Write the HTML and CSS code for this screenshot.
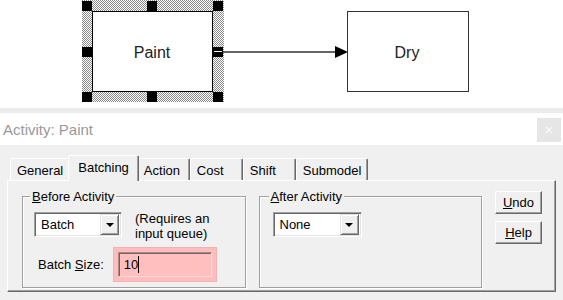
FILE: index.html
```html
<!DOCTYPE html>
<html lang="en">
<head>
    <meta charset="UTF-8">
    <meta name="viewport" content="width=device-width, initial-scale=1.0">
    <title>Activity: Paint</title>
    <link rel="stylesheet" href="styles.css">
</head>
<body>
    <div class="canvas">
        <svg width="563" height="108" viewBox="0 0 563 108">
            <defs>
                <pattern id="dither" width="2" height="2" patternUnits="userSpaceOnUse">
                    <rect width="2" height="2" fill="#fff"/>
                    <rect width="1" height="1" fill="#8a8a8a"/>
                    <rect x="1" y="1" width="1" height="1" fill="#8a8a8a"/>
                </pattern>
            </defs>
            <!-- selection frame round Paint -->
            <rect x="82" y="0" width="142" height="102" fill="url(#dither)"/>
            <rect x="92.5" y="11.5" width="120" height="80" fill="#fff" stroke="#000"/>
            <rect x="82" y="1" width="10" height="10" fill="#000"/>
            <rect x="147" y="1" width="10" height="10" fill="#000"/>
            <rect x="213" y="1" width="10" height="10" fill="#000"/>
            <rect x="82" y="47" width="10" height="10" fill="#000"/>
            <rect x="213" y="47" width="10" height="10" fill="#000"/>
            <rect x="82" y="92" width="10" height="10" fill="#000"/>
            <rect x="147" y="92" width="10" height="10" fill="#000"/>
            <rect x="213" y="92" width="10" height="10" fill="#000"/>
            <line x1="214" y1="51.5" x2="222" y2="51.5" stroke="#fff"/>
            <text x="152" y="57.5" class="node-label" text-anchor="middle">Paint</text>

            <!-- connector -->
            <line x1="223" y1="52" x2="337" y2="52" stroke="#333" stroke-width="1.5"/>
            <polygon points="335,46 348,52 335,58" fill="#000"/>

            <rect x="347.5" y="11.5" width="121" height="80" fill="#fff" stroke="#333"/>
            <text x="407" y="57.5" class="node-label" text-anchor="middle">Dry</text>
        </svg>
    </div>
    <div class="shade"></div>

    <div class="dialog">
        <div class="titlebar">
            <span class="title">Activity: Paint</span>
            <span class="close">&times;</span>
        </div>
        <div class="dialog-body">
            <div class="tabs">
                <div class="tab">General</div>
                <div class="tab active">Batching</div>
                <div class="tab">Action</div>
                <div class="tab">Cost</div>
                <div class="tab">Shift</div>
                <div class="tab">Submodel</div>
            </div>
            <div class="panel">
                <div class="group">
                    <span class="group-title"><u>B</u>efore Activity</span>
                    <div class="row">
                        <div class="combo">
                            <span class="combo-value">Batch</span>
                            <span class="combo-button"><i class="arrow"></i></span>
                        </div>
                        <div class="note">(Requires an<br>input queue)</div>
                    </div>
                    <div class="row size-row">
                        <label class="field-label" for="batchSize">Batch <u>S</u>ize:</label>
                        <div class="highlight">
                            <div class="field" id="batchSize">10<span class="caret"></span></div>
                        </div>
                    </div>
                </div>
                <div class="group group-after">
                    <span class="group-title"><u>A</u>fter Activity</span>
                    <div class="row">
                        <div class="combo combo-wide">
                            <span class="combo-value">None</span>
                            <span class="combo-button"><i class="arrow"></i></span>
                        </div>
                    </div>
                </div>
                <div class="buttons">
                    <button class="btn"><u>U</u>ndo</button>
                    <button class="btn"><u>H</u>elp</button>
                </div>
            </div>
        </div>
    </div>
</body>
</html>
```

FILE: styles.css
```css
body {
    margin: 0;
    width: 563px;
    height: 300px;
    overflow: hidden;
    font-family: "Liberation Sans", Arial, sans-serif;
    font-size: 13px;
    color: #000;
    background-color: #f0f0f0;
}
.canvas {
    height: 108px;
    background-color: #fff;
}
.canvas svg {
    display: block;
}
.node-label {
    font-family: "Liberation Sans", Arial, sans-serif;
    font-size: 16px;
    fill: #222;
}
.shade {
    height: 5px;
    background-color: #ebebeb;
}

/* title bar */
.titlebar {
    height: 32px;
    background-color: #fff;
    display: flex;
    align-items: center;
    justify-content: space-between;
    padding-left: 3px;
}
.title {
    font-size: 15px;
    color: #999;
}
.close {
    width: 24px;
    height: 24px;
    margin-right: 2px;
    margin-top: 2px;
    background-color: #e6e6e6;
    color: #fafafa;
    font-size: 15px;
    line-height: 24px;
    text-align: center;
}

/* tabs */
.dialog-body {
    height: 155px;
    box-sizing: border-box;
    padding: 10px 0 0 7px;
}
.tabs {
    display: flex;
    align-items: flex-end;
    height: 25px;
    padding-left: 3px;
}
.tab {
    box-sizing: border-box;
    height: 22px;
    min-width: 53px;
    padding: 2px 6px 0;
    line-height: 19px;
    border-top: 1px solid #fff;
    border-left: 1px solid #fff;
    border-right: 1px solid #696969;
    border-radius: 2px 2px 0 0;
    box-shadow: inset -1px 0 0 #a0a0a0;
    background-color: #f0f0f0;
}
.tab.active {
    position: relative;
    height: 26px;
    margin: 0 -2px -1px;
    padding: 2px 9px 0;
}
.panel {
    box-sizing: border-box;
    width: 549px;
    height: 112px;
    display: flex;
    align-items: flex-start;
    gap: 13px;
    padding: 15px 13px 0 14px;
    border-top: 1px solid #fff;
    border-left: 1px solid #fff;
    border-right: 1px solid #696969;
    border-bottom: 1px solid #696969;
    box-shadow: inset -1px -1px 0 #a0a0a0;
}

/* group boxes */
.group {
    box-sizing: border-box;
    width: 224px;
    height: 92px;
    padding: 0 11px;
    border: 1px solid #a0a0a0;
    box-shadow: inset 1px 1px 0 #fff, 1px 1px 0 #fff;
}
.group-after {
    padding-left: 13px;
}
.group-title {
    display: block;
    width: fit-content;
    margin: -8px 0 0 -4px;
    padding: 0 2px;
    line-height: 15px;
    background-color: #f0f0f0;
}
.row {
    display: flex;
    align-items: flex-start;
    gap: 13px;
    margin-top: 8px;
}
.size-row {
    align-items: center;
    gap: 9px;
    margin-top: 6px;
    padding-left: 4px;
}

/* combo box */
.combo {
    box-sizing: border-box;
    width: 88px;
    height: 25px;
    display: flex;
    align-items: center;
    justify-content: space-between;
    padding: 2px;
    background-color: #fff;
    border-top: 1px solid #a0a0a0;
    border-left: 1px solid #a0a0a0;
    border-right: 1px solid #fff;
    border-bottom: 1px solid #fff;
    box-shadow: inset 1px 1px 0 #696969, inset -1px -1px 0 #e3e3e3;
}
.combo-wide {
    width: 89px;
}
.combo-value {
    padding-left: 4px;
}
.combo-button {
    box-sizing: border-box;
    width: 19px;
    height: 21px;
    display: flex;
    align-items: center;
    justify-content: center;
    background-color: #f0f0f0;
    border-top: 1px solid #e3e3e3;
    border-left: 1px solid #e3e3e3;
    border-right: 1px solid #696969;
    border-bottom: 1px solid #696969;
    box-shadow: inset 1px 1px 0 #fff, inset -1px -1px 0 #a0a0a0;
}
.arrow {
    width: 0;
    height: 0;
    border-left: 4px solid transparent;
    border-right: 4px solid transparent;
    border-top: 4px solid #000;
}
.note {
    line-height: 15px;
    margin-top: -1px;
}

/* batch size field */
.highlight {
    padding: 4px;
    background-color: #ffbdbd;
    border: 1px solid #f5b0b0;
}
.field {
    box-sizing: border-box;
    width: 94px;
    height: 25px;
    display: flex;
    align-items: center;
    padding-left: 5px;
    background-color: #ffbfbf;
    border-top: 1px solid #a98989;
    border-left: 1px solid #a98989;
    border-right: 1px solid #ffd8d8;
    border-bottom: 1px solid #ffd8d8;
    box-shadow: inset 1px 1px 0 #7a6262;
}
.caret {
    width: 1px;
    height: 17px;
    background-color: #000;
}

/* buttons */
.buttons {
    display: flex;
    flex-direction: column;
    gap: 7px;
    margin-top: -5px;
}
.btn {
    box-sizing: border-box;
    width: 47px;
    height: 23px;
    padding: 0;
    font-family: inherit;
    font-size: 13px;
    color: #000;
    background-color: #f0f0f0;
    border-top: 1px solid #fff;
    border-left: 1px solid #fff;
    border-right: 1px solid #696969;
    border-bottom: 1px solid #696969;
    border-radius: 0;
    box-shadow: inset -1px -1px 0 #a0a0a0;
}
```
